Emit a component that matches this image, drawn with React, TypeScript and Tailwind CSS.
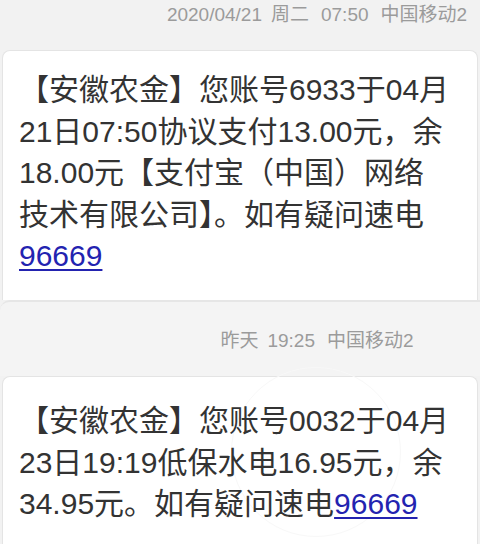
const font = {
    fontFamily: '"Liberation Sans", "Noto Sans CJK SC", sans-serif',
};

type Msg = {
    time: string[];
    lines: (string | { link: string })[][];
};

const messages: Msg[] = [
    {
        time: ["2020/04/21", "周二", "07:50", "中国移动2"],
        lines: [
            ["【安徽农金】您账号6933于04月"],
            ["21日07:50协议支付13.00元，余"],
            ["18.00元【支付宝（中国）网络"],
            ["技术有限公司】。如有疑问速电"],
            [{ link: "96669" }],
        ],
    },
    {
        time: ["昨天", "19:25", "中国移动2"],
        lines: [
            ["【安徽农金】您账号0032于04月"],
            ["23日19:19低保水电16.95元，余"],
            ["34.95元。如有疑问速电", { link: "96669" }],
        ],
    },
];

function Stamp({ parts }: { parts: string[] }) {
    return (
        <div className="flex h-[30px] items-center justify-center gap-[12px] pl-[154px] text-[19px] text-[#9b9b9b]">
            {parts.map((p) => (
                <span key={p} className="first:mr-[-3px]">
                    {p}
                </span>
            ))}
        </div>
    );
}

export default function App() {
    return (
        <div className="h-[544px] w-[480px] overflow-hidden bg-[#f2f2f2]" style={font}>
            <Stamp parts={messages[0].time} />
            <div className="mt-[20px] ml-[2px] mr-[2px] h-[250px] rounded-t-[8px] border border-b-0 border-[#e4e4e4] bg-white px-[16px] pt-[18px]">
                <Body lines={messages[0].lines} />
            </div>
            <div className="h-[76px] rounded-tl-[10px] border-t-2 border-[#e6e6e6] bg-[#f4f4f4] pt-[24px]">
                <Stamp parts={messages[1].time} />
            </div>
            <div className="relative ml-[2px] mr-[2px] h-[200px] rounded-t-[8px] border border-b-0 border-[#e4e4e4] bg-white px-[16px] pt-[23px]">
                <div className="pointer-events-none absolute left-[228px] top-[-10px] h-[170px] w-[170px] rounded-full border border-[#f8f8f8]" />
                <Body lines={messages[1].lines} />
            </div>
        </div>
    );
}

function Body({ lines }: { lines: Msg["lines"] }) {
    return (
        <div className="relative text-[30px] leading-[41.5px] text-[#333333]">
            {lines.map((line, i) => (
                <div key={i} className="whitespace-nowrap">
                    {line.map((seg, j) =>
                        typeof seg === "string" ? (
                            <span key={j}>{seg}</span>
                        ) : (
                            <span key={j} className="text-[#2323b0] underline decoration-[2px] underline-offset-[3px]">
                                {seg.link}
                            </span>
                        ),
                    )}
                </div>
            ))}
        </div>
    );
}
